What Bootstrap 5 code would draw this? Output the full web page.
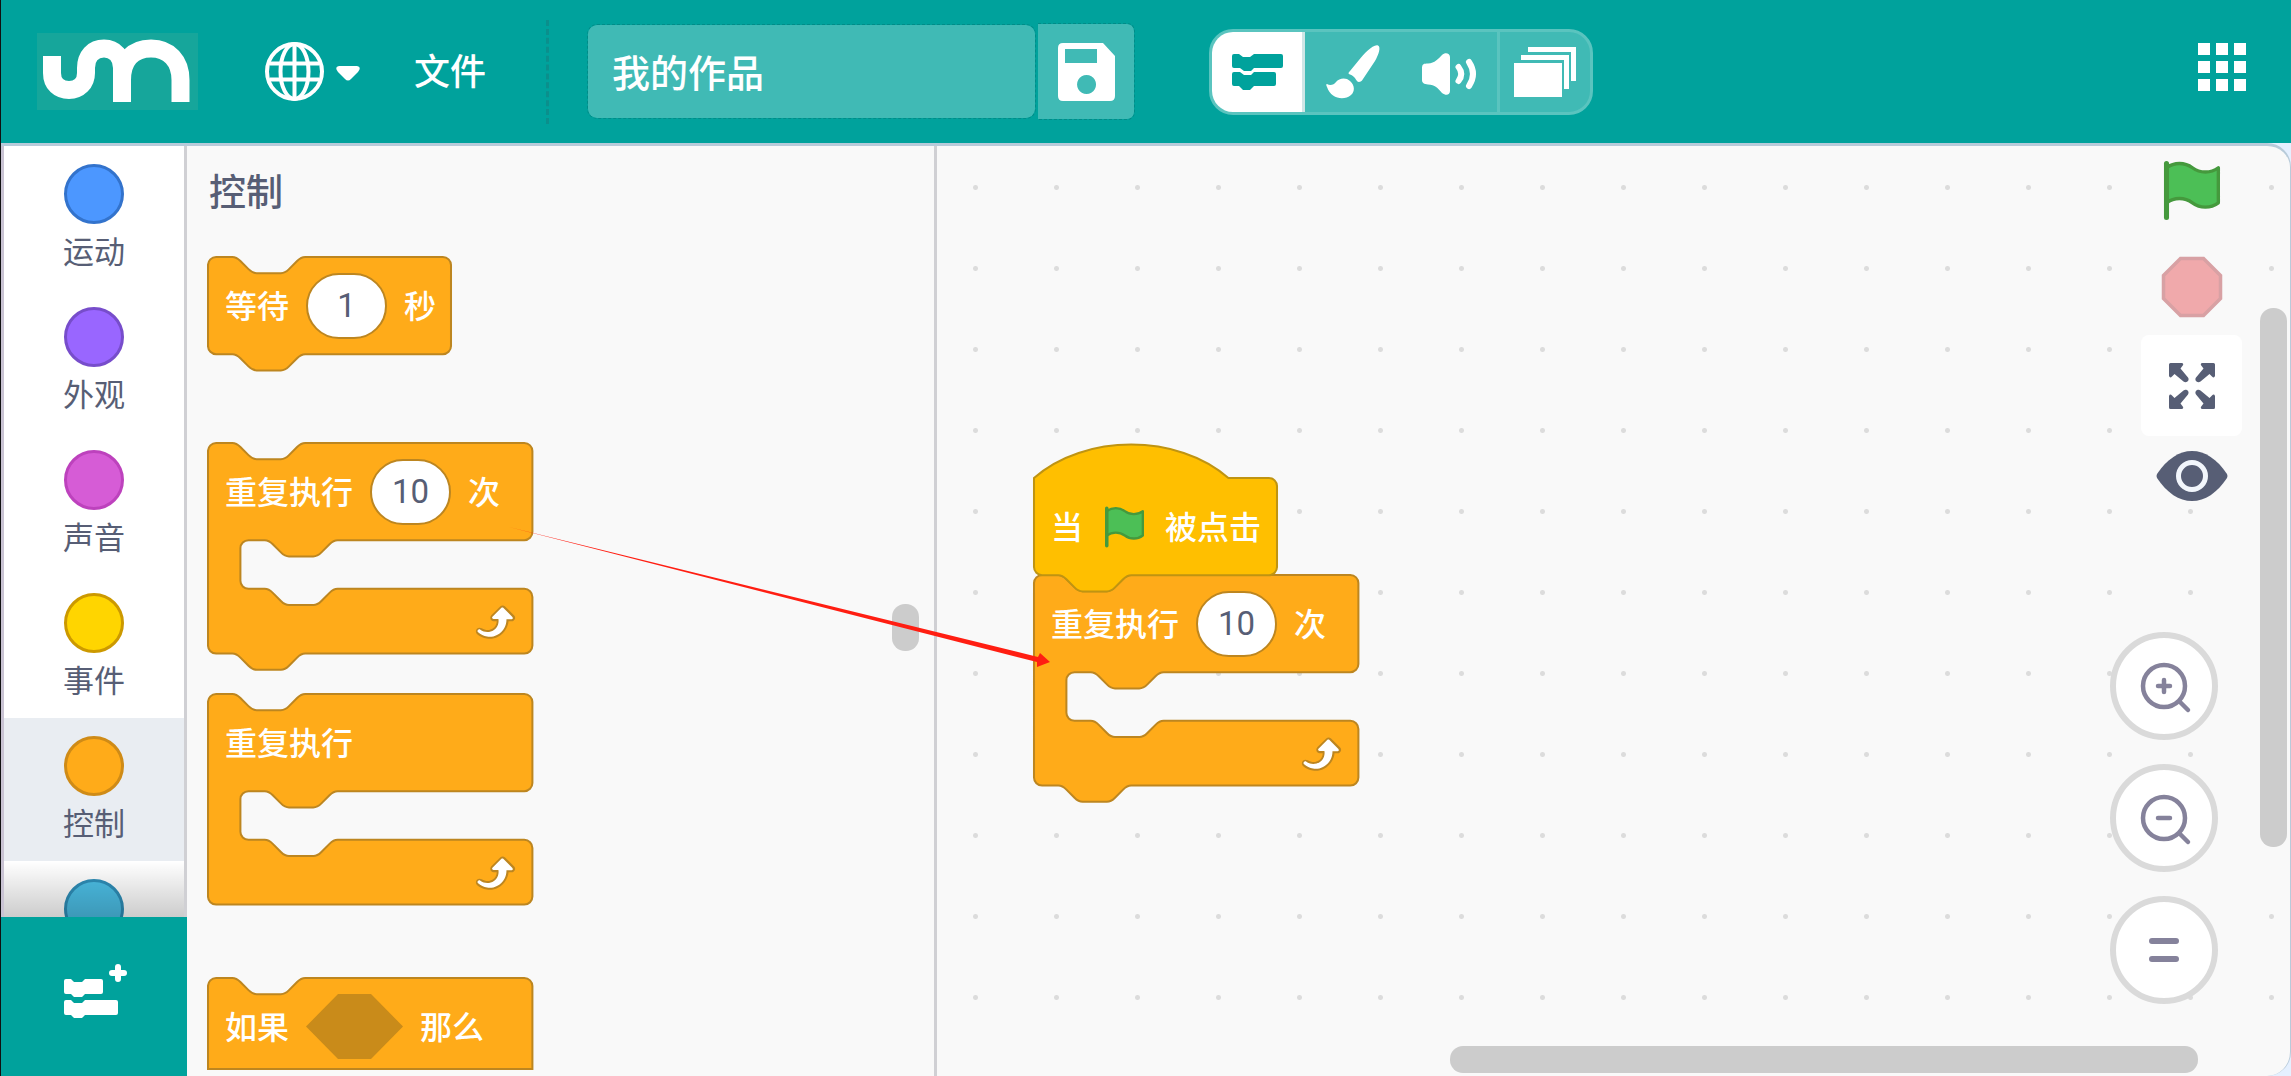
<!DOCTYPE html>
<html lang="zh-CN">
<head>
<meta charset="utf-8">
<meta name="viewport" content="width=device-width, initial-scale=1">
<title>我的作品</title>
<link rel="stylesheet" href="https://cdn.jsdelivr.net/npm/bootstrap@5.3.0/dist/css/bootstrap.min.css">
<style>
  :root { --teal: #00a29c; --ink: #575e75; --line: #d0d0d4; }
  body { font-family: Roboto, "Noto Sans CJK SC", sans-serif; background: #e5f0ff; color: var(--ink); border-left: 1px solid #111; overflow: hidden; }
  button { border: 0; background: none; padding: 0; color: inherit; }
  svg { display: block; overflow: visible; }
  .topbar { height: 143px; background: var(--teal); color: #fff; flex: none; }
  .brand { margin-left: 36px; width: 161px; height: 77px; background: #16a69b; }
  .lang { margin-left: 67px; gap: 12px; }
  .file-menu { margin-left: 54px; padding-top: 3px; font-size: 36px; font-weight: 500; }
  .divide { margin: 0 38px 0 60px; height: 104px; border-left: 3px dashed #0b8f8c; }
  .title-box { width: 449px; height: 95px; padding: 0 24px 3px; border: 1px dashed #008c88; border-radius: 10px; background: #40bab5; color: #fff; font-size: 38px; font-weight: 500; background-clip: padding-box; }
  .save-btn { width: 97px; height: 97px; margin-left: 2px; border: 1px dashed #008c88; border-left: 0; border-radius: 0 8px 8px 0; background: #40bab5; background-clip: padding-box; }
  .tabs { margin-left: 74px; height: 86px; border: 3px solid #5ac4bf; border-radius: 24px; background: #40bab5; overflow: hidden; }
  .tabs button { width: 96px; display: flex; align-items: center; justify-content: center; }
  .tabs .on { width: 93px; background: #fff; color: var(--teal); border-right: 3px solid #cfe6e6; }
  .tabs .last { width: 93px; border-left: 3px solid #5ac4bf; }
  .apps { margin-right: 45px; margin-bottom: 10px; }
  .editor { min-height: 0; border-top: 3px solid #b8cbda; border-right: 1px solid #b8cbda; border-radius: 0 24px 24px 0; background: #f9f9f9; overflow: hidden; }
  .side { width: 186px; background: #fff; flex: none; }
  .cats { min-height: 0; overflow: hidden; border-left: 3px solid #c9c3d3; border-right: 3px solid var(--line); }
  .cats::after { content: ""; position: absolute; left: 0; right: 0; bottom: 0; height: 56px; background: linear-gradient(rgba(0,0,0,0), rgba(0,0,0,.2)); }
  .cat { height: 143px; padding-top: 18px; flex: none; font-size: 31px; line-height: 57px; color: var(--ink); text-decoration: none; }
  .cat.on { background: #e9edf2; }
  .dot { width: 60px; height: 60px; border: 3px solid; border-radius: 50%; flex: none; }
  .add-ext { height: 159px; padding-bottom: 12px; background: var(--teal); color: #fff; flex: none; }
  .palette { width: 750px; padding: 0 0 6px 20px; border-right: 3px solid var(--line); flex: none; }
  .palette-clip { overflow: hidden; padding-left: 1px; }
  .palette h2 { flex: none; height: 111px; margin: 0; padding: 20px 0 0 1px; font-size: 37px; line-height: 56px; font-weight: 500; }
  .grip { right: 15px; top: 458px; width: 27px; height: 47px; border-radius: 13px; background: #ccc; }
  .blk { position: relative; width: 325px; height: 211px; flex: none; }
  .blk.short { width: 244px; height: 97px; }
  .blk > svg { position: absolute; left: 0; top: 0; }
  .blk-row { position: relative; height: 97px; padding-left: 17px; gap: 17px; color: #fff; font-size: 32px; font-weight: 500; line-height: 48px; white-space: nowrap; }
  .blk-text { padding-top: 3px; }
  .num { width: 81px; height: 66px; padding: 0; border: 2px solid #bd8620; border-radius: 33px; background: #fff; color: var(--ink); text-align: center; font-size: 33px; font-weight: 400; }
  .hex { width: 97px; height: 65px; background: #c98b1a; clip-path: polygon(33% 0, 67% 0, 100% 50%, 67% 100%, 33% 100%, 0 50%); }
  .flag-slot { width: 48px; }
  .after-89 { margin-bottom: 89px; } .after-40 { margin-bottom: 40px; } .after-73 { margin-bottom: 73px; }
  .stage { min-width: 0; background: radial-gradient(circle, #dcdcdc 2px, transparent 3px) -2px 1px / 81px 81px; }
  .script { left: 97px; top: 332px; }
  .run { top: 15px; right: 48px; width: 101px; }
  .run .stop { margin: 37px 0 18px; }
  .full { width: 101px; height: 101px; border-radius: 8px; background: #fff; margin-bottom: 15px; }
  .zooms { right: 72px; bottom: 72px; gap: 24px; }
  .zooms button { width: 108px; height: 108px; border: 6px solid #dadada; border-radius: 50%; background: #fff; color: #85829b; }
  .bar-v { right: 3px; top: 162px; width: 27px; height: 539px; border-radius: 13px; background: #ccc; }
  .bar-h { right: 92px; bottom: 3px; width: 748px; height: 27px; border-radius: 13px; background: #ccc; }
  .hint { left: 0; top: 0; width: 1px; height: 1px; pointer-events: none; z-index: 5; }
</style>
</head>
<body class="vh-100 d-flex flex-column">

<svg width="0" height="0" class="position-absolute" aria-hidden="true">
  <symbol id="flag" viewBox="0 0 16.63 17.5">
    <path d="M.75,2A6.44,6.44,0,0,1,8.44,2h0a6.44,6.44,0,0,0,7.69,0V12.4a6.44,6.44,0,0,1-7.69,0h0a6.44,6.44,0,0,0-7.69,0" fill="#4cbf56" stroke="#45993d" stroke-width="1" stroke-linejoin="round"/>
    <path d="M.75,16.75V.75" stroke="#45993d" stroke-width="1.5" stroke-linecap="round"/>
  </symbol>
  <g id="loop">
    <path fill="#bd8620" d="M23.3,11c-0.3,0.6-0.9,1-1.5,1h-1.6c-0.1,1.3-0.5,2.5-1.1,3.6c-0.9,1.7-2.3,3.2-4.1,4.1c-1.7,0.9-3.6,1.2-5.5,0.9c-1.8-0.3-3.5-1.1-4.9-2.3c-0.7-0.7-0.7-1.9,0-2.6c0.6-0.6,1.6-0.7,2.3-0.2H7c0.9,0.6,1.9,0.9,2.9,0.9s1.9-0.3,2.7-0.9c1.1-0.8,1.8-2.1,1.8-3.5h-1.5c-0.9,0-1.7-0.7-1.7-1.7c0-0.4,0.2-0.9,0.5-1.2l4.4-4.4c0.7-0.6,1.7-0.6,2.4,0L23,9.2C23.5,9.7,23.6,10.4,23.3,11z"/>
    <path fill="#fff" d="M21.8,11h-2.6c0,1.5-0.3,2.9-1,4.2c-0.8,1.6-2.1,2.8-3.7,3.6c-1.5,0.8-3.3,1.1-4.9,0.8c-1.6-0.2-3.2-1-4.4-2.1c-0.4-0.3-0.4-0.9-0.1-1.2c0.3-0.4,0.9-0.4,1.2-0.1l0,0c1,0.7,2.2,1.1,3.4,1.1s2.3-0.3,3.3-1c0.9-0.6,1.6-1.5,2-2.6c0.3-0.9,0.4-1.8,0.2-2.8h-2.4c-0.4,0-0.7-0.3-0.7-0.7c0-0.2,0.1-0.3,0.2-0.4l4.4-4.4c0.3-0.3,0.7-0.3,0.9,0L22,9.8c0.3,0.3,0.4,0.6,0.3,0.9S22,11,21.8,11z"/>
  </g>
  <g id="repeat">
    <path fill="#ffab19" stroke="#bd8620" d="M0,4A4,4 0 0,1 4,0H12c2,0 3,1 4,2l4,4c1,1 2,2 4,2h12c2,0 3,-1 4,-2l4,-4c1,-1 2,-2 4,-2H156.200a4,4 0 0,1 4,4v40a4,4 0 0,1 -4,4H64c-2,0 -3,1 -4,2l-4,4c-1,1 -2,2 -4,2h-12c-2,0 -3,-1 -4,-2l-4,-4c-1,-1 -2,-2 -4,-2h-8a4,4 0 0,0 -4,4v16a4,4 0 0,0 4,4h8c2,0 3,1 4,2l4,4c1,1 2,2 4,2h12c2,0 3,-1 4,-2l4,-4c1,-1 2,-2 4,-2H156.200a4,4 0 0,1 4,4v24a4,4 0 0,1 -4,4H48c-2,0 -3,1 -4,2l-4,4c-1,1 -2,2 -4,2h-12c-2,0 -3,-1 -4,-2l-4,-4c-1,-1 -2,-2 -4,-2H4a4,4 0 0,1 -4,-4z"/>
    <use href="#loop" x="128.200" y="76"/>
  </g>
  <path id="corner" d="M0,1.500Q0,0 1.500,0H13Q15.500,1 13,3.500L11.500,5.500L19,14.500C21,17.500 17.500,20.500 14.500,18.500L5.500,11L3,13.500Q1,15.500 0,13Z"/>
</svg>

<header class="topbar d-flex align-items-center">
  <a href="#" class="brand" aria-label="uMaker">
    <svg width="161" height="77" fill="none" stroke="#fff" stroke-width="18">
      <path d="M15,23V40C15,51 22,57 32,57S49,50 49,40V35C49,23 56,15.500 67,15.500S85,24 85,35V69M85,47C85,27 96,15.500 114,15.500S143.500,28 143.500,47V69"/>
    </svg>
  </a>
  <button class="lang d-flex align-items-center" aria-label="语言">
    <svg width="59" height="59" fill="none" stroke="#fff" stroke-width="4">
      <circle cx="29.500" cy="29.500" r="27.500"/><ellipse cx="29.500" cy="29.500" rx="14" ry="27.500"/>
      <path d="M29.500,2V57M5,21.500H54M5,37.500H54"/>
    </svg>
    <svg width="24" height="16" fill="#fff"><path d="M3,2H21Q26,3 22,8L15,15Q12,18 9,15L2,8Q-2,3 3,2Z"/></svg>
  </button>
  <button class="file-menu">文件</button>
  <div class="divide"></div>
  <input class="title-box" type="text" value="我的作品" aria-label="作品名称">
  <button class="save-btn d-flex align-items-center justify-content-center" aria-label="保存">
    <svg width="57" height="58"><path fill="#fff" fill-rule="evenodd" d="M5,0H45L57,13V53Q57,58 52,58H5Q0,58 0,53V5Q0,0 5,0ZM7,6V20H39V6ZM28.500,32a9.500,9.500 0 1,0 .1,0Z"/></svg>
  </button>
  <div class="tabs d-flex" role="group" aria-label="编辑模式">
    <button class="on" aria-label="代码">
      <svg width="51" height="37" fill="currentColor">
        <path d="M2,1H7L11,4H18L22,1H49Q51,1 51,3V13Q51,15 49,15H22L19,18H12L8,15H2Q0,15 0,13V3Q0,1 2,1Z"/>
        <path d="M2,19H8L12,22H19L22,19H42Q44,19 44,21V31Q44,33 42,33H22L18,37H11L7,33H2Q0,33 0,31V21Q0,19 2,19Z"/>
      </svg>
    </button>
    <button aria-label="造型">
      <svg width="54" height="54" fill="#fff"><path d="M52,.5C47,-1 38,9 33,15L24,26C22,28 22,29 24,29.500C28,31 29,33 31,36C32,37.500 35,37 36,35.500L49,16C53,9 55,2 52,.5ZM1,39C4,41 8,40 10,37C13,33 20,32 24,36C29,40 29,47 25,50C18,56 5,54 1,42C0,40 0,39 1,39Z"/></svg>
    </button>
    <button aria-label="声音">
      <svg width="54" height="38" fill="#fff"><path d="M0,15C0,11 2,10.500 6,10.500C13,10 16,6 20,2C23,-1 28,0 28,4V38C28,42 24,43 20,40C16,35 13,32 6,31.500C2,31 0,30 0,27Z"/><path d="M36.500,14Q42,21 36.500,28M47,9Q55,21 47,33" fill="none" stroke="#fff" stroke-width="6" stroke-linecap="round"/></svg>
    </button>
    <button class="last" aria-label="背景">
      <svg width="62" height="50" fill="#fff"><path d="M0,16H48V50H0ZM7,8H55V42H50V13H7ZM14,0H62V34H57V5H14Z"/></svg>
    </button>
  </div>
  <button class="apps ms-auto" aria-label="应用">
    <svg width="48" height="48" fill="#fff"><path d="M0,0h12v12h-12zM18,0h12v12h-12zM36,0h12v12h-12zM0,18h12v12h-12zM18,18h12v12h-12zM36,18h12v12h-12zM0,36h12v12h-12zM18,36h12v12h-12zM36,36h12v12h-12z"/></svg>
  </button>
</header>

<main class="editor d-flex flex-fill position-relative">
  <nav class="side d-flex flex-column" aria-label="积木分类">
    <div class="cats position-relative d-flex flex-column flex-fill">
      <a href="#" class="cat d-flex flex-column align-items-center"><span class="dot" style="background:#4c97ff;border-color:#3373cc"></span>运动</a>
      <a href="#" class="cat d-flex flex-column align-items-center"><span class="dot" style="background:#9966ff;border-color:#774dcb"></span>外观</a>
      <a href="#" class="cat d-flex flex-column align-items-center"><span class="dot" style="background:#d65cd6;border-color:#bd42bd"></span>声音</a>
      <a href="#" class="cat d-flex flex-column align-items-center"><span class="dot" style="background:#ffd500;border-color:#cc9900"></span>事件</a>
      <a href="#" class="cat on d-flex flex-column align-items-center"><span class="dot" style="background:#ffab19;border-color:#cf8b17"></span>控制</a>
      <a href="#" class="cat d-flex flex-column align-items-center" aria-label="侦测"><span class="dot" style="background:#4cbfe6;border-color:#2e8eb8"></span></a>
    </div>
    <button class="add-ext d-flex align-items-center justify-content-center" aria-label="添加扩展">
      <svg width="60" height="56" fill="#fff">
        <path d="M2,16H7L10,19H18L21,16H37Q39,16 39,18V29Q39,31 37,31H21L18,34H10L7,31H2Q0,31 0,29V18Q0,16 2,16ZM2,37H7L10,40H18L21,37H52Q54,37 54,39V50Q54,52 52,52H21L18,55H10L7,52H2Q0,52 0,50V39Q0,37 2,37Z"/>
        <path d="M54,4V16M48,10H60" stroke="#fff" stroke-width="6" stroke-linecap="round"/>
      </svg>
    </button>
  </nav>

  <section class="palette position-relative">
    <div class="palette-clip h-100 d-flex flex-column">
      <h2>控制</h2>
      <div class="blk short after-89">
        <svg width="244" height="97"><path transform="scale(2.025)" fill="#ffab19" stroke="#bd8620" d="M0,4A4,4 0 0,1 4,0H12c2,0 3,1 4,2l4,4c1,1 2,2 4,2h12c2,0 3,-1 4,-2l4,-4c1,-1 2,-2 4,-2H116a4,4 0 0,1 4,4v40a4,4 0 0,1 -4,4H48c-2,0 -3,1 -4,2l-4,4c-1,1 -2,2 -4,2h-12c-2,0 -3,-1 -4,-2l-4,-4c-1,-1 -2,-2 -4,-2H4a4,4 0 0,1 -4,-4z"/></svg>
        <div class="blk-row d-flex align-items-center"><span class="blk-text">等待</span><input class="num" type="text" value="1" aria-label="秒数"><span class="blk-text">秒</span></div>
      </div>
      <div class="blk after-40">
        <svg width="325" height="211"><use href="#repeat" transform="scale(2.025)"/></svg>
        <div class="blk-row d-flex align-items-center"><span class="blk-text">重复执行</span><input class="num" type="text" value="10" aria-label="次数"><span class="blk-text">次</span></div>
      </div>
      <div class="blk after-73">
        <svg width="325" height="211"><g transform="scale(2.025)"><path fill="#ffab19" stroke="#bd8620" d="M0,4A4,4 0 0,1 4,0H12c2,0 3,1 4,2l4,4c1,1 2,2 4,2h12c2,0 3,-1 4,-2l4,-4c1,-1 2,-2 4,-2H156.200a4,4 0 0,1 4,4v40a4,4 0 0,1 -4,4H64c-2,0 -3,1 -4,2l-4,4c-1,1 -2,2 -4,2h-12c-2,0 -3,-1 -4,-2l-4,-4c-1,-1 -2,-2 -4,-2h-8a4,4 0 0,0 -4,4v16a4,4 0 0,0 4,4h8c2,0 3,1 4,2l4,4c1,1 2,2 4,2h12c2,0 3,-1 4,-2l4,-4c1,-1 2,-2 4,-2H156.200a4,4 0 0,1 4,4v24a4,4 0 0,1 -4,4H4a4,4 0 0,1 -4,-4z"/><use href="#loop" x="128.200" y="76"/></g></svg>
        <div class="blk-row d-flex align-items-center"><span class="blk-text">重复执行</span></div>
      </div>
      <div class="blk">
        <svg width="325" height="97"><path transform="scale(2.025)" fill="#ffab19" stroke="#bd8620" d="M0,4A4,4 0 0,1 4,0H12c2,0 3,1 4,2l4,4c1,1 2,2 4,2h12c2,0 3,-1 4,-2l4,-4c1,-1 2,-2 4,-2H156.200a4,4 0 0,1 4,4V45H0z"/></svg>
        <div class="blk-row d-flex align-items-center"><span class="blk-text">如果</span><span class="hex"></span><span class="blk-text">那么</span></div>
      </div>
    </div>
    <div class="grip position-absolute"></div>
  </section>

  <section class="stage flex-fill position-relative">
    <div class="script position-absolute">
      <div class="blk short z-1">
        <svg width="244" height="97"><path transform="scale(2.025)" fill="#ffbf00" stroke="#bf9412" d="M0,0C25,-22 71,-22 96,0H116a4,4 0 0,1 4,4v40a4,4 0 0,1 -4,4H48c-2,0 -3,1 -4,2l-4,4c-1,1 -2,2 -4,2h-12c-2,0 -3,-1 -4,-2l-4,-4c-1,-1 -2,-2 -4,-2H4a4,4 0 0,1 -4,-4z"/></svg>
        <div class="blk-row d-flex align-items-center"><span class="blk-text">当</span><span class="flag-slot d-flex justify-content-center"><svg width="39" height="42"><use href="#flag"/></svg></span><span class="blk-text">被点击</span></div>
      </div>
      <div class="blk">
        <svg width="325" height="211"><use href="#repeat" transform="scale(2.025)"/></svg>
        <div class="blk-row d-flex align-items-center"><span class="blk-text">重复执行</span><input class="num" type="text" value="10" aria-label="次数"><span class="blk-text">次</span></div>
      </div>
    </div>

    <div class="run position-absolute d-flex flex-column align-items-center">
      <button aria-label="运行"><svg width="58" height="59"><use href="#flag"/></svg></button>
      <button class="stop" aria-label="停止"><svg width="60" height="60"><path d="M18.500,1.500H41.500L58.500,18.500V41.500L41.500,58.500H18.500L1.500,41.500V18.500Z" fill="#f0a9ab" stroke="#d8a1a4" stroke-width="3.500"/></svg></button>
      <button class="full d-flex align-items-center justify-content-center" aria-label="全屏">
        <svg width="46" height="46" fill="#575e75"><use href="#corner"/><use href="#corner" transform="translate(46 0) scale(-1 1)"/><use href="#corner" transform="translate(0 46) scale(1 -1)"/><use href="#corner" transform="translate(46 46) scale(-1 -1)"/></svg>
      </button>
      <button aria-label="预览"><svg width="72" height="50"><path fill="#575e75" d="M1,23C11,8 23,0 36,0S61,8 71,23Q72,25 71,27C61,42 49,50 36,50S11,42 1,27Q0,25 1,23Z"/><circle cx="36" cy="25" r="13.500" fill="none" stroke="#f2f6fc" stroke-width="5"/></svg></button>
    </div>

    <div class="zooms position-absolute d-flex flex-column">
      <button class="d-flex align-items-center justify-content-center" aria-label="放大"><svg width="46" height="46" fill="none" stroke="currentColor" stroke-width="4.500" stroke-linecap="round"><circle cx="23" cy="23" r="21"/><path d="M39,39L47,47M17,23H29M23,17V29"/></svg></button>
      <button class="d-flex align-items-center justify-content-center" aria-label="缩小"><svg width="46" height="46" fill="none" stroke="currentColor" stroke-width="4.500" stroke-linecap="round"><circle cx="23" cy="23" r="21"/><path d="M39,39L47,47M17,23H29"/></svg></button>
      <button class="d-flex align-items-center justify-content-center" aria-label="重置缩放"><svg width="30" height="24" stroke="currentColor" stroke-width="6" stroke-linecap="round"><path d="M3,3H27M3,21H27"/></svg></button>
    </div>
    <div class="bar-v position-absolute"></div>
    <div class="bar-h position-absolute"></div>
  </section>

  <!-- drag hint: palette block to script -->
  <svg class="hint position-absolute" aria-hidden="true"><path fill="#ff1e12" d="M508,381L1037,511L1039,507L1049,516L1036,521L1036,516Z"/></svg>
</main>

<script src="https://cdn.jsdelivr.net/npm/bootstrap@5.3.0/dist/js/bootstrap.bundle.min.js"></script>
</body>
</html>
